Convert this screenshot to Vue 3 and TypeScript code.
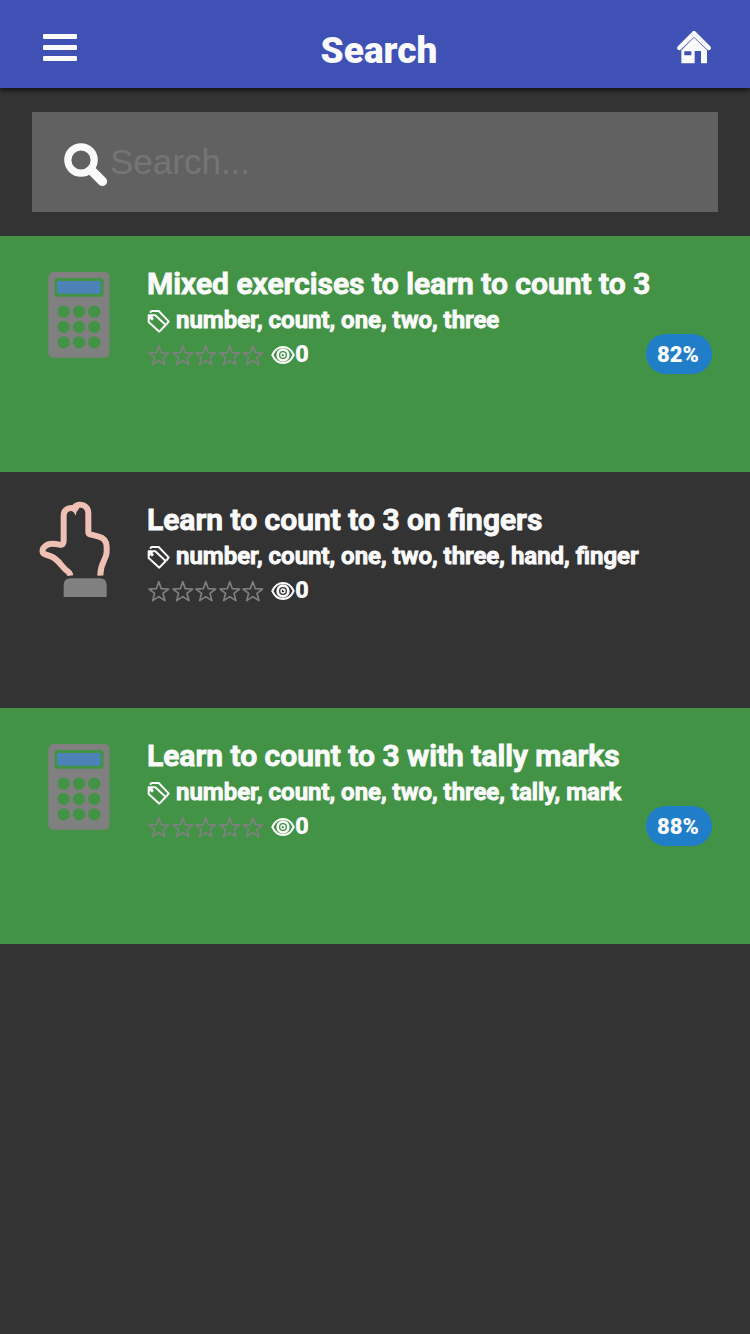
<script setup lang="ts">
import { ref } from 'vue'

interface Exercise {
  id: number
  kind: 'calculator' | 'fingers'
  title: string
  tags: string[]
  views: number
  score?: number
}

const query = ref('')

const exercises: Exercise[] = [
  { id: 1, kind: 'calculator', title: 'Mixed exercises to learn to count to 3', tags: ['number', 'count', 'one', 'two', 'three'], views: 0, score: 82 },
  { id: 2, kind: 'fingers', title: 'Learn to count to 3 on fingers', tags: ['number', 'count', 'one', 'two', 'three', 'hand', 'finger'], views: 0 },
  { id: 3, kind: 'calculator', title: 'Learn to count to 3 with tally marks', tags: ['number', 'count', 'one', 'two', 'three', 'tally', 'mark'], views: 0, score: 88 },
]

const keys = [0, 1, 2, 3, 4, 5, 6, 7, 8].map((n) => ({ x: 101 + (n % 3) * 46, y: 185 + Math.floor(n / 3) * 46 }))
</script>

<template>
  <div class="page">
    <header class="bar">
      <button class="bar-button" type="button" aria-label="Menu">
        <svg width="34" height="34" viewBox="0 0 34 34" fill="currentColor" aria-hidden="true">
          <rect x="0" y="3" width="34" height="5" rx="1" />
          <rect x="0" y="14" width="34" height="5" rx="1" />
          <rect x="0" y="25" width="34" height="5" rx="1" />
        </svg>
      </button>
      <h1>Search</h1>
      <a class="bar-button" href="#" aria-label="Home">
        <svg width="34" height="34" viewBox="0 0 102 102" fill="currentColor" aria-hidden="true">
          <path d="M56 2 L101 47 Q104 58 93 58 L51 18 L9 58 Q-2 58 1 47 L46 2 Q51 -3 56 2Z" />
          <path fill-rule="evenodd" d="M51 20 L90 58 V97 H72 V60 H53 V97 H13 V58Z M22 61 V73 H43 V61Z" />
        </svg>
      </a>
    </header>

    <main>
      <form class="search" role="search" @submit.prevent>
        <label for="query" aria-label="Search">
          <svg width="44" height="44" viewBox="0 0 44 44" fill="none" stroke="currentColor" aria-hidden="true">
            <circle cx="17" cy="17" r="13.2" stroke-width="7.2" />
            <path d="M27 27 L38.4 38.4" stroke-width="9.4" stroke-linecap="round" />
          </svg>
        </label>
        <input id="query" v-model="query" type="text" placeholder="Search..." autocomplete="off" />
      </form>

      <ul class="list">
        <li v-for="item in exercises" :key="item.id" :class="{ done: item.score !== undefined }">
          <a class="item" href="#">
            <svg v-if="item.kind === 'calculator'" class="picture" viewBox="18 42 264 300" aria-hidden="true">
              <path
                fill="#808080"
                fill-rule="evenodd"
                d="M72 66 H222 Q239 66 239 83 V306 Q239 323 222 323 H72 Q55 323 55 306 V83 Q55 66 72 66Z M82 84 Q73 84 73 93 V131 Q73 140 82 140 H212 Q221 140 221 131 V93 Q221 84 212 84Z"
              />
              <rect x="81" y="93" width="131" height="38" fill="#4d82b8" />
              <circle v-for="key in keys" :key="`${key.x}-${key.y}`" class="key" :cx="key.x" :cy="key.y" r="18.5" />
            </svg>
            <svg v-else class="picture" viewBox="18 30 264 300" aria-hidden="true">
              <path
                fill="none"
                stroke="#efc1b5"
                stroke-width="18"
                d="M121 257 Q120 247 108 240 C94 228 83 207 65 200 L46 193 C34 189 36 176 45 169 C55 159 74 161 88 164 Q101 167 101 153 V77 C101 58 116 52 131 55 C139 42 157 41 167 50 Q175 57 175 70 V127 Q175 133 184 134 L204 139 C221 143 230 154 230 170 V185 C231 208 210 217 211 257"
              />
              <path fill="#efc1b5" d="M117 61 Q130 61 137 77 Q137 66 148 55 L132 46 L113 55Z" />
              <path fill="#808080" d="M101 321 V286 Q101 265 122 265 H209 Q230 265 230 286 V321Z" />
            </svg>

            <div class="info">
              <h2>{{ item.title }}</h2>
              <p class="tags">
                <svg width="24" height="24" viewBox="0 0 72 72" fill="none" stroke="currentColor" stroke-linejoin="round" aria-hidden="true">
                  <path d="M5 19 V39 L37 68 L56 48 L25 19Z" stroke-width="6" />
                  <path d="M9 11 L14 6 H35 L65 37 L58 47" stroke-width="6" />
                  <path d="M5 19 H20 L5 35Z" fill="currentColor" stroke-width="1" />
                  <circle cx="15" cy="29" r="4" fill="currentColor" stroke-width="2" />
                </svg>
                <span>{{ item.tags.join(', ') }}</span>
              </p>
              <div class="stats">
                <span class="stars" role="img" aria-label="Not rated">
                  <svg v-for="n in 5" :key="n" viewBox="0 0 71 72" fill="none" stroke="#808080" stroke-width="5" stroke-linejoin="round">
                    <path d="M35.500 8 L43 29 L65 30 L48 43 L54 65 L35.500 53 L17 65 L23 43 L6 30 L28 29Z" />
                  </svg>
                </span>
                <svg class="eye" viewBox="0 0 72 72" fill="none" stroke="currentColor" aria-hidden="true">
                  <path d="M4 36 C18 4 54 4 68 36 C54 68 18 68 4 36Z" stroke-width="6" />
                  <circle cx="36" cy="36" r="16" stroke-width="8" />
                  <circle cx="36" cy="36" r="6" stroke-width="4" />
                  <circle cx="39" cy="33" r="3" fill="currentColor" stroke="none" />
                </svg>
                <span>{{ item.views }}</span>
                <span v-if="item.score !== undefined" class="score">{{ item.score }}%</span>
              </div>
            </div>
          </a>
        </li>
      </ul>
    </main>
  </div>
</template>

<style>
body {
  margin: 0;
  background: #333;
}
</style>

<style scoped>
.page {
  min-height: 100vh;
  background: #333;
  color: #fafafa;
  font-family: Roboto, sans-serif;
  font-weight: 900;
}
.bar {
  position: relative;
  display: flex;
  align-items: center;
  box-sizing: border-box;
  height: 88px;
  padding: 8px 32px 0 36px;
  background: #3f51b5;
  box-shadow: 0 2px 5px rgba(0, 0, 0, 0.7);
}
.bar-button {
  display: flex;
  align-items: center;
  justify-content: center;
  width: 48px;
  height: 48px;
  padding: 0;
  border: 0;
  background: none;
  color: inherit;
}
h1 {
  flex: 1;
  margin: 0;
  padding: 6px 0 0 4px;
  font-size: 37px;
  line-height: 48px;
  font-weight: inherit;
  text-align: center;
}
.search {
  display: flex;
  align-items: center;
  box-sizing: border-box;
  height: 100px;
  margin: 24px 32px;
  padding: 0 32px;
  background: #616161;
}
.search label {
  display: flex;
  padding-top: 5px;
}
.search input {
  flex: 1;
  min-width: 0;
  height: 60px;
  padding: 0 2px;
  border: 0;
  outline: 0;
  background: transparent;
  color: #fafafa;
  font: 35px "Liberation Sans", Arial, sans-serif;
}
.search input::placeholder {
  color: #757575;
  opacity: 1;
}
.list {
  margin: 0;
  padding: 0;
  list-style: none;
}
.item {
  display: flex;
  align-items: flex-start;
  gap: 23px;
  box-sizing: border-box;
  min-height: 236px;
  padding: 28px 38px 28px 36px;
  color: #fafafa;
  text-decoration: none;
}
.done {
  background: #429345;
}
.picture {
  flex: none;
  width: 88px;
  height: 100px;
}
.key {
  fill: #429345;
}
.info {
  flex: 1;
  min-width: 0;
  padding-top: 2px;
}
h2 {
  margin: 0;
  font-size: 30px;
  line-height: 36px;
  font-weight: 600;
  -webkit-text-stroke: 1px currentColor;
}
.tags {
  display: flex;
  align-items: center;
  gap: 5px;
  margin: 0;
  font-size: 24px;
  line-height: 36px;
  font-weight: 600;
  -webkit-text-stroke: 1px currentColor;
}
.tags svg {
  padding-top: 2px;
}
.stats {
  display: flex;
  align-items: center;
  height: 32px;
  font-size: 24px;
}
.stars {
  display: flex;
  width: 118px;
  padding-top: 2px;
  margin-right: 6px;
}
.stars svg {
  flex: 1;
  min-width: 0;
  height: 24px;
}
.eye {
  width: 24px;
  height: 24px;
  padding-top: 2px;
}
.score {
  box-sizing: border-box;
  min-width: 66px;
  margin-left: auto;
  padding: 2px 10px 0 8px;
  border-radius: 20px;
  background: #207ec9;
  font-size: 22px;
  line-height: 38px;
  text-align: center;
}
</style>
